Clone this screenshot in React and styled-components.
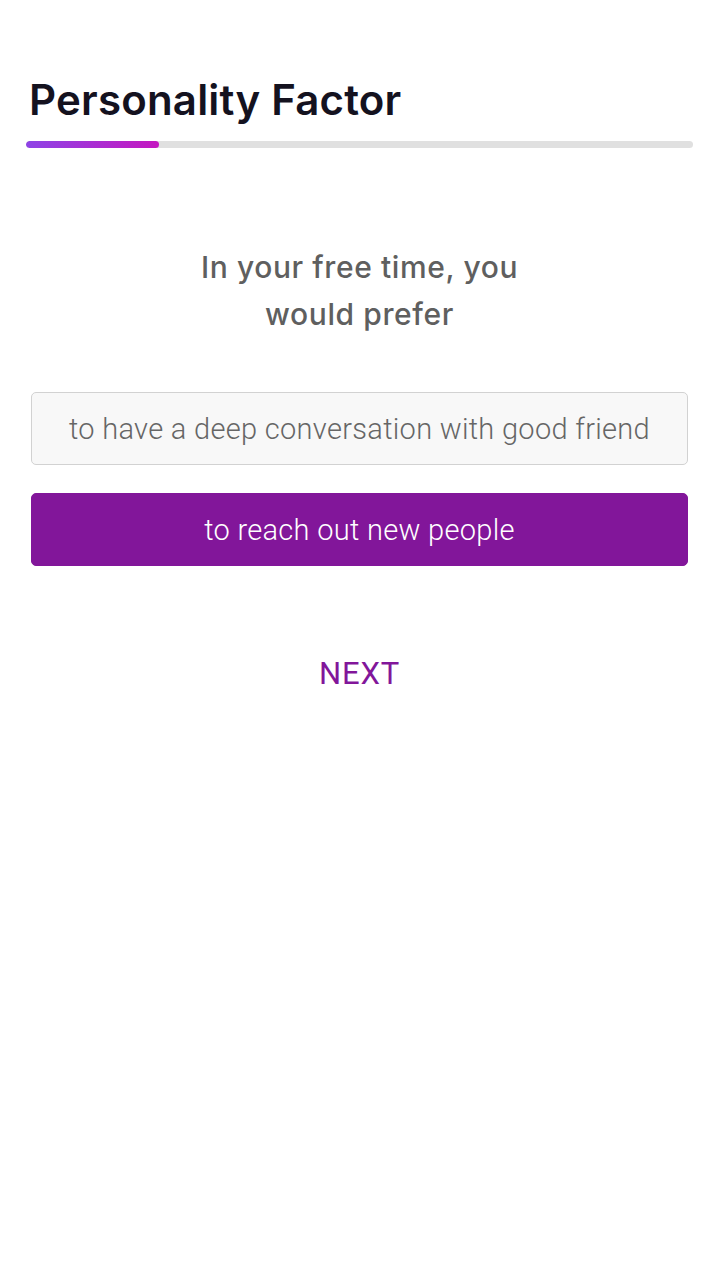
import styled, { createGlobalStyle } from "styled-components";

const GlobalStyle = createGlobalStyle`
  * { box-sizing: border-box; }
  body {
    margin: 0;
    background: #ffffff;
    font-family: Inter, "Noto Sans", sans-serif;
  }
`;

const Page = styled.div`
  width: 720px;
  min-height: 1280px;
  padding: 73px 27px 0 26px;
  display: flex;
  flex-direction: column;
`;

const Title = styled.h1`
  margin: 0 0 0 3px;
  font-family: Inter, sans-serif;
  font-weight: 600;
  font-size: 42px;
  line-height: 54px;
  color: #14121f;
  letter-spacing: 0.2px;
`;

const Track = styled.div`
  margin-top: 14px;
  height: 7px;
  border-radius: 4px;
  background: #e0e0e0;
  overflow: hidden;
`;

const Fill = styled.div`
  height: 100%;
  border-radius: 4px;
  background: linear-gradient(90deg, #8e44e6, #c417c0);
`;

const Question = styled.p`
  margin: 96px auto 0;
  width: 360px;
  text-align: center;
  font-family: Inter, sans-serif;
  font-weight: 500;
  font-size: 30px;
  line-height: 47px;
  letter-spacing: 0.6px;
  color: #5f5f5f;
`;

const Options = styled.div`
  margin: 54px 5px 0;
  display: flex;
  flex-direction: column;
  gap: 28px;
`;

const Option = styled.button`
  height: 73px;
  width: 100%;
  border-radius: 5px;
  border: 1px solid ${(p) => (p.selected ? "#82169a" : "#d2d2d2")};
  background: ${(p) => (p.selected ? "#82169a" : "#f8f8f8")};
  color: ${(p) => (p.selected ? "#ffffff" : "#666666")};
  font-family: Roboto, sans-serif;
  font-weight: 300;
  font-size: 29px;
  letter-spacing: 0.3px;
  padding: 0;
  cursor: pointer;
`;

const Next = styled.button`
  margin: 88px auto 0;
  border: none;
  background: none;
  font-family: Roboto, sans-serif;
  font-weight: 400;
  font-size: 31px;
  letter-spacing: 0.8px;
  color: #82169a;
  cursor: pointer;
`;

const options = [
  { text: "to have a deep conversation with good friend", selected: false },
  { text: "to reach out new people", selected: true },
];

export default function App() {
  const progress = 20;
  return (
    <>
      <GlobalStyle />
      <Page>
        <Title>Personality Factor</Title>
        <Track>
          <Fill style={{ width: `${progress}%` }} />
        </Track>
        <Question>In your free time, you would prefer</Question>
        <Options>
          {options.map((o) => (
            <Option key={o.text} selected={o.selected}>
              {o.text}
            </Option>
          ))}
        </Options>
        <Next>NEXT</Next>
      </Page>
    </>
  );
}
